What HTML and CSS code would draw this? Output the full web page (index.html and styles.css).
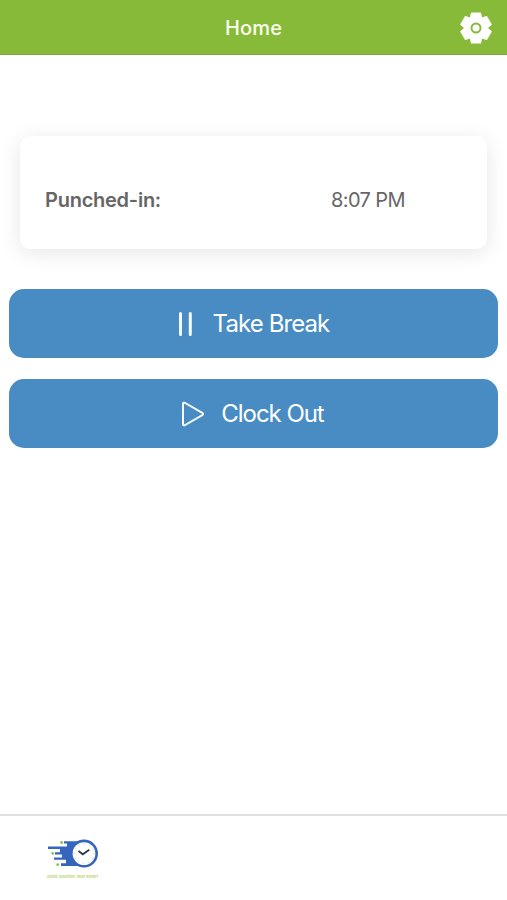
FILE: index.html
```html
<!DOCTYPE html>
<html lang="en">
<head>
<meta charset="utf-8">
<title>Home</title>
<link rel="stylesheet" href="styles.css">
</head>
<body>
<header class="topbar">
  <h1 class="title">Home</h1>
  <svg class="gear" viewBox="-16 -16 32 32" aria-hidden="true">
    <g fill="#fff" stroke="#fff" stroke-width="1.4" stroke-linejoin="round">
      <circle r="10.3"/>
      <path id="tooth" d="M-5.500 -9.500L-4.400 -14.800H4.400L5.500 -9.500V9.500L4.400 14.800H-4.400L-5.500 9.500Z"/>
      <use href="#tooth" transform="rotate(60)"/>
      <use href="#tooth" transform="rotate(120)"/>
    </g>
    <circle r="4.5" fill="#fff" stroke="#88ba3a" stroke-width="2"/>
  </svg>
</header>
<main class="content">
  <section class="card">
    <span class="label">Punched-in:</span>
    <span class="time">8:07 PM</span>
  </section>
  <button class="action">
    <svg class="pause" viewBox="0 0 14 24" aria-hidden="true"><path d="M2.500 1.5V22.5M12.300 1.5V22.5"/></svg>
    <span class="break-text">Take Break</span>
  </button>
  <button class="action">
    <svg class="play" viewBox="0 0 24 26" aria-hidden="true"><path d="M2 3.2Q2 .9 4.2 2L21.3 11.8Q23 13 21.3 14.2L4.2 24Q2 25.100 2 22.800Z"/></svg>
    <span class="clock-text">Clock Out</span>
  </button>
</main>
<footer class="footer">
  <svg class="logo" viewBox="0 0 52 42" aria-hidden="true">
    <path d="M17 3.300H32V28H14V25.200H19V21.800H7V19.500H15V16.500H8V14.200H13V10.900H1V8.600H20V5.600H17Z" fill="#3565bd"/>
    <circle cx="37" cy="15.600" r="12.700" fill="#fff" stroke="#3565bd" stroke-width="2.600"/>
    <circle cx="37" cy="15.600" r="9.900" fill="none" stroke="#9ca9bd" stroke-width=".8" stroke-dasharray=".7 4.480"/>
    <path d="M31.500 13L35.800 16.300L42.300 11.800" stroke="#303a45" stroke-width="1.800" fill="none"/>
    <path d="M13.500 4.500H15.800M4.500 15.400H6.800M9.500 26.600H11.800" stroke="#73bd2d" stroke-width="2.300"/>
    <text class="caption" x="0" y="39.500" textLength="51" lengthAdjust="spacingAndGlyphs">Good Solution. Run Smart</text>
  </svg>
</footer>
</body>
</html>
```

FILE: styles.css
```css
* { box-sizing: border-box; }
body {
  margin: 0;
  height: 900px;
  display: flex;
  flex-direction: column;
  background: #fff;
  font-family: Inter, "Liberation Sans", sans-serif;
}
.topbar {
  height: 55px;
  padding-top: 2px;
  display: grid;
  grid-template-columns: 1fr auto 1fr;
  align-items: center;
  background: #88ba3a;
  border-bottom: 1px solid #7da746;
}
.title {
  grid-column: 2;
  margin: 0;
  color: #fafff0;
  font-size: 20px;
  font-weight: 500;
  line-height: 24px;
  letter-spacing: .15px;
}
.gear {
  width: 32px;
  height: 32px;
  justify-self: end;
  margin-right: 15px;
}
.content {
  flex: 1;
  display: flex;
  flex-direction: column;
  padding: 81px 9px 0;
}
.card {
  height: 113px;
  margin: 0 11px 40px;
  padding: 14px 82px 0 25px;
  display: flex;
  align-items: center;
  justify-content: space-between;
  border-radius: 10px;
  background: #fff;
  box-shadow: 0 4px 22px rgba(0, 0, 0, .10);
  color: #666;
  font-size: 20px;
  line-height: 24px;
}
.label { font-weight: 600; letter-spacing: -.25px; }
.time { letter-spacing: -.6px; }
.action {
  height: 69px;
  margin: 0 0 21px;
  padding: 0;
  display: flex;
  align-items: center;
  justify-content: center;
  border: 0;
  border-radius: 15px;
  background: #488cc3;
  color: #fff;
  font: 400 24px/30px Inter, "Liberation Sans", sans-serif;
  letter-spacing: -.9px;
}
.pause, .play {
  fill: none;
  stroke: #f5fcff;
  stroke-linecap: round;
  stroke-linejoin: round;
}
.pause { width: 14px; height: 24px; margin-right: 21px; stroke-width: 3; }
.play { width: 24px; height: 26px; margin-right: 16px; stroke-width: 2; }
.clock-text { letter-spacing: -1.05px; margin-right: 2px; }
.footer {
  height: 86px;
  padding: 22px 0 0 47px;
  border-top: 2px solid #e1e1e1;
}
.logo { display: block; width: 52px; height: 42px; }
.caption {
  fill: #b9d36a;
  font-size: 4px;
  font-weight: 600;
}
```
